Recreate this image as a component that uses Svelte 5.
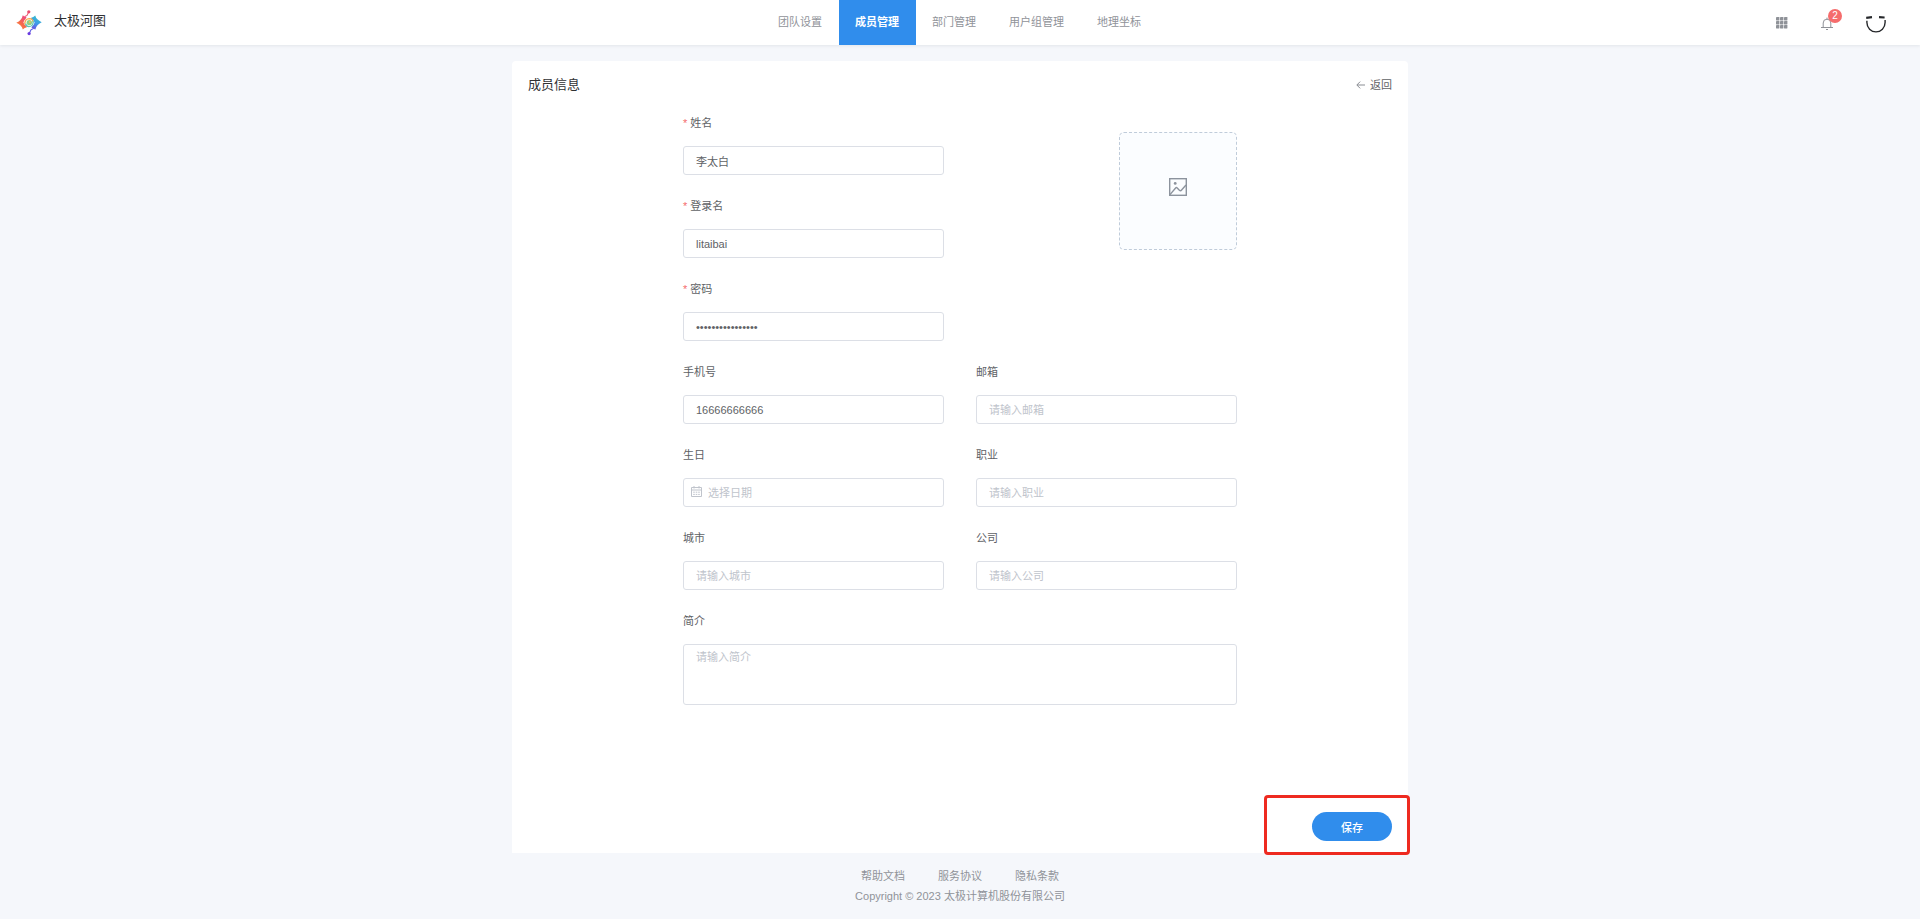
<script>
    const tabs = ["团队设置", "成员管理", "部门管理", "用户组管理", "地理坐标"];
    const links = ["帮助文档", "服务协议", "隐私条款"];

    let activeTab = "成员管理";
    let notices = 2;

    // 必填项，右侧是头像上传
    let required = [
        { id: "name", label: "姓名", type: "text", value: "李太白" },
        { id: "login", label: "登录名", type: "text", value: "litaibai" },
        {
            id: "password",
            label: "密码",
            type: "password",
            value: "abcdefgh12345678",
        },
    ];

    let optional = [
        { id: "phone", label: "手机号", placeholder: "请输入手机号", value: "16666666666" },
        { id: "email", label: "邮箱", placeholder: "请输入邮箱", value: "" },
        { id: "birthday", label: "生日", placeholder: "选择日期", value: "", date: true },
        { id: "job", label: "职业", placeholder: "请输入职业", value: "" },
        { id: "city", label: "城市", placeholder: "请输入城市", value: "" },
        { id: "company", label: "公司", placeholder: "请输入公司", value: "" },
    ];

    let intro = "";

    function save() {}
</script>

<div class="page">
    <header class="topbar">
        <a class="brand" href="#home">
            <svg class="logo" viewBox="0 0 26 26" aria-hidden="true">
                <defs>
                    <linearGradient id="warm" x1="0" y1="1" x2="0.7" y2="0">
                        <stop offset="0" stop-color="#fb9a3c" />
                        <stop offset="0.5" stop-color="#f66a4a" />
                        <stop offset="1" stop-color="#ec4a83" />
                    </linearGradient>
                    <linearGradient id="cool" x1="0.6" y1="0" x2="0.2" y2="1">
                        <stop offset="0" stop-color="#35c3c4" />
                        <stop offset="0.5" stop-color="#3f9bea" />
                        <stop offset="1" stop-color="#6a4be0" />
                    </linearGradient>
                </defs>
                <path
                    d="M12.7 2 11 5.4 8.4 6.8"
                    fill="none"
                    stroke="#ef5a72"
                    stroke-width="1.1"
                />
                <path
                    d="M6.8 5.2Q8.4 7 10.6 7.2L9.4 9.2Q8.2 10.2 7.4 12.6 8.2 15.4 10.6 15.8L10.8 17.2Q8.6 17.4 6.8 19.4 5.6 15 .3 12.8 5.8 10.2 6.8 5.2Z"
                    fill="url(#warm)"
                />
                <path
                    d="M13.2 23.4 15 19.8 17.8 18.2"
                    fill="none"
                    stroke="#5a5ae2"
                    stroke-width="1.1"
                />
                <path
                    d="M19.2 19.8Q17.6 18 15.4 17.8L16.6 15.8Q17.8 14.8 18.6 12.4 17.8 9.6 15.4 9.2L15.2 7.8Q17.4 7.6 19.2 5.6 20.4 10 25.7 12.2 20.2 14.8 19.2 19.8Z"
                    fill="url(#cool)"
                />
                <path
                    d="M8.8 14.6Q8.6 8.6 13.4 8.6 17.2 8.8 17 12.4"
                    fill="none"
                    stroke="#f9a84b"
                    stroke-width="1.3"
                />
                <path
                    d="M17.2 10.6Q17.6 16.4 13 16.6 10 16.4 9.6 13.6"
                    fill="none"
                    stroke="#5cc6b4"
                    stroke-width="1.3"
                />
                <circle cx="13.3" cy="12.6" r="2.7" fill="#8fcf86" />
                <circle cx="13.8" cy="12" r="1" fill="#e9c65c" />
                <circle cx="12.8" cy="1.8" r="1.6" fill="#ec4a6d" />
                <circle cx="13.1" cy="23.6" r="1.6" fill="#6a3be0" />
            </svg>
            <span>太极河图</span>
        </a>

        <nav class="tabs">
            {#each tabs as tab}
                <a
                    href="#{tab}"
                    class:active={tab === activeTab}
                    on:click|preventDefault={() => (activeTab = tab)}>{tab}</a
                >
            {/each}
        </nav>

        <div class="tools">
            <button class="tool" aria-label="应用">
                <svg width="12" height="12" viewBox="0 0 12 12" fill="#8f9298">
                    {#each [0, 4, 8] as y}
                        {#each [0, 4, 8] as x}
                            <rect {x} {y} width="3.4" height="3.4" rx="0.4" />
                        {/each}
                    {/each}
                </svg>
            </button>
            <button class="tool bell" aria-label="通知">
                <svg
                    width="12"
                    height="14"
                    viewBox="0 0 12 14"
                    fill="none"
                    stroke="#8f9298"
                >
                    <path d="M0 11.5H12M2.2 11.5V7a3.8 3.8 0 0 1 7.6 0v4.5M6 3.2V1.6M5 13.5H7" />
                </svg>
                <span class="badge">{notices}</span>
            </button>
            <button class="tool" aria-label="个人中心">
                <svg
                    width="20"
                    height="20"
                    viewBox="0 0 20 20"
                    fill="none"
                    stroke="#26282b"
                >
                    <path d="M.9 7.8v1.8a9.1 9.3 0 0 0 18.2 0V7" stroke-width="1.4" />
                    <path d="M.2 4.8 6 4.2M13 4.2 18.6 4.5" stroke-width="2.2" />
                </svg>
            </button>
        </div>
    </header>

    <main class="card">
        <div class="card-head">
            <h1>成员信息</h1>
            <button class="back" type="button">
                <svg width="9" height="8" viewBox="0 0 9 8" fill="none" stroke="#8a8d93">
                    <path d="M9 4H1M4.2.6.8 4l3.4 3.4" />
                </svg>
                <span>返回</span>
            </button>
        </div>

        <form class="form" id="member" on:submit|preventDefault={save}>
            <div class="required">
                {#each required as field}
                    <div class="field">
                        <label for={field.id}
                            ><span class="star">*</span>{field.label}</label
                        >
                        {#if field.type === "password"}
                            <input
                                id={field.id}
                                type="password"
                                bind:value={field.value}
                            />
                        {:else}
                            <input
                                id={field.id}
                                type="text"
                                bind:value={field.value}
                            />
                        {/if}
                    </div>
                {/each}
            </div>

            <label class="upload">
                <input type="file" accept="image/*" aria-label="上传头像" />
                <svg
                    width="18"
                    height="18"
                    viewBox="0 0 18 18"
                    fill="none"
                    stroke="#8c939d"
                    stroke-width="1.4"
                >
                    <rect x="0.7" y="0.7" width="16.6" height="16.6" />
                    <path d="M1 16.6 6.6 10Q7.4 9.2 8.2 10L10.4 12.2Q11.6 13.2 12.6 12L17 7" />
                    <circle cx="6.2" cy="5.4" r="1.4" fill="#8c939d" stroke="none" />
                </svg>
            </label>

            {#each optional as field}
                <div class="field">
                    <label for={field.id}>{field.label}</label>
                    <div class="control" class:date={field.date}>
                        {#if field.date}
                            <svg
                                width="11"
                                height="11"
                                viewBox="0 0 11 11"
                                fill="none"
                                stroke="#c0c4cc"
                            >
                                <path d="M.5 1.5h10v9H.5zM.5 4h10M3 0v2.5M8 0v2.5" />
                                <path d="M2.2 6.2h6.6M2.2 8.4h6.6" stroke-dasharray="1.6 0.9" />
                            </svg>
                        {/if}
                        <input
                            id={field.id}
                            type="text"
                            placeholder={field.placeholder}
                            bind:value={field.value}
                        />
                    </div>
                </div>
            {/each}

            <div class="field wide">
                <label for="intro">简介</label>
                <textarea id="intro" placeholder="请输入简介" bind:value={intro}
                ></textarea>
            </div>
        </form>

        <div class="card-foot">
            <button class="save" type="submit" form="member">保存</button>
            <div class="marker"></div>
        </div>
    </main>

    <footer class="footer">
        <div class="links">
            {#each links as link}
                <a href="#{link}">{link}</a>
            {/each}
        </div>
        <p>Copyright © 2023 太极计算机股份有限公司</p>
    </footer>
</div>

<style>
    :global(body) {
        background: #f5f7fb;
    }

    .page {
        display: flex;
        flex-direction: column;
        min-height: 100vh;
        font-family: "Liberation Sans", "Noto Sans CJK SC", sans-serif;
        font-size: 11px;
        color: #606266;
    }

    .page * {
        box-sizing: border-box;
    }

    a {
        color: inherit;
        text-decoration: none;
    }

    button,
    input,
    textarea {
        font: inherit;
        color: inherit;
    }

    button {
        padding: 0;
        border: none;
        background: none;
        cursor: pointer;
    }

    svg {
        display: block;
        flex: none;
    }

    .topbar {
        display: grid;
        grid-template-columns: 1fr auto 1fr;
        height: 45px;
        background: #fff;
        box-shadow: 0 1px 3px rgba(0, 21, 41, 0.08);
    }

    .brand {
        display: flex;
        align-items: center;
        gap: 12px;
        padding-left: 16px;
        font-size: 13px;
        line-height: 20px;
        color: #303133;
    }

    .brand span {
        padding-bottom: 3px;
    }

    .logo {
        width: 26px;
        height: 26px;
    }

    .tabs {
        display: flex;
    }

    .tabs a {
        padding: 0 17px 0 16px;
        line-height: 45px;
        color: #909399;
    }

    .tabs a.active {
        background: #308dec;
        color: #fff;
        font-weight: bold;
    }

    .tools {
        display: flex;
        align-items: center;
        justify-content: flex-end;
        gap: 33px;
        padding-right: 34px;
    }

    .bell {
        position: relative;
    }

    .badge {
        position: absolute;
        top: -7px;
        left: 7px;
        width: 14px;
        height: 14px;
        border-radius: 50%;
        background: #f56c6c;
        color: #fff;
        font-size: 10px;
        line-height: 14px;
        text-align: center;
    }

    .card {
        display: flex;
        flex-direction: column;
        flex: 1;
        width: 100%;
        max-width: 896px;
        margin: 16px auto 0;
        background: #fff;
        border-radius: 4px 4px 0 0;
    }

    .card-head {
        display: flex;
        justify-content: space-between;
        align-items: center;
        height: 52px;
        padding: 0 16px 4px;
    }

    h1 {
        margin: 0;
        font-size: 13px;
        font-weight: normal;
        line-height: 20px;
        color: #303133;
    }

    .back {
        display: flex;
        align-items: center;
        gap: 5px;
        line-height: 20px;
    }

    .form {
        display: grid;
        grid-template-columns: 1fr 1fr;
        gap: 21px 32px;
        width: 100%;
        max-width: 554px;
        margin: 0 auto;
    }

    .required {
        display: grid;
        gap: 21px;
    }

    .field {
        display: flex;
        flex-direction: column;
        gap: 13px;
    }

    .field label {
        line-height: 20px;
    }

    .star {
        margin-right: 3px;
        color: #f56c6c;
    }

    .wide {
        grid-column: 1 / -1;
    }

    .field input,
    .field textarea {
        width: 100%;
        padding: 0 12px;
        border: 1px solid #dcdfe6;
        border-radius: 3px;
        background: #fff;
        outline: none;
    }

    .field input {
        display: block;
        height: 29px;
    }

    .field textarea {
        display: block;
        height: 61px;
        padding-top: 4px;
        line-height: 17px;
        resize: none;
    }

    .field input:focus,
    .field textarea:focus {
        border-color: #308dec;
    }

    .field input::placeholder,
    .field textarea::placeholder {
        color: #c0c4cc;
    }

    .control {
        position: relative;
    }

    .control svg {
        position: absolute;
        top: 8px;
        left: 8px;
    }

    .field .date input {
        padding-left: 24px;
    }

    .upload {
        display: flex;
        align-items: center;
        justify-content: center;
        justify-self: end;
        position: relative;
        width: 118px;
        height: 118px;
        margin-top: 19px;
        padding-bottom: 8px;
        border: 1px dashed #c0ccda;
        border-radius: 5px;
        background: #fbfdff;
        cursor: pointer;
    }

    .upload input {
        position: absolute;
        inset: 0;
        width: 100%;
        opacity: 0;
        cursor: pointer;
    }

    .card-foot {
        position: relative;
        display: flex;
        justify-content: flex-end;
        margin-top: auto;
        padding: 12px 16px;
    }

    .save {
        width: 80px;
        height: 29px;
        border-radius: 15px;
        background: #308dec;
        color: #fff;
        font-weight: 500;
    }

    /* 保存按钮的红色提示框 */
    .marker {
        position: absolute;
        right: -2px;
        bottom: -2px;
        width: 146px;
        height: 60px;
        border: 3px solid #ee2a20;
        border-radius: 4px;
        pointer-events: none;
    }

    .footer {
        padding: 13px 0;
        line-height: 20px;
        text-align: center;
        color: #909399;
    }

    .links {
        display: flex;
        justify-content: center;
        gap: 33px;
    }

    .footer p {
        margin: 0;
    }
</style>
